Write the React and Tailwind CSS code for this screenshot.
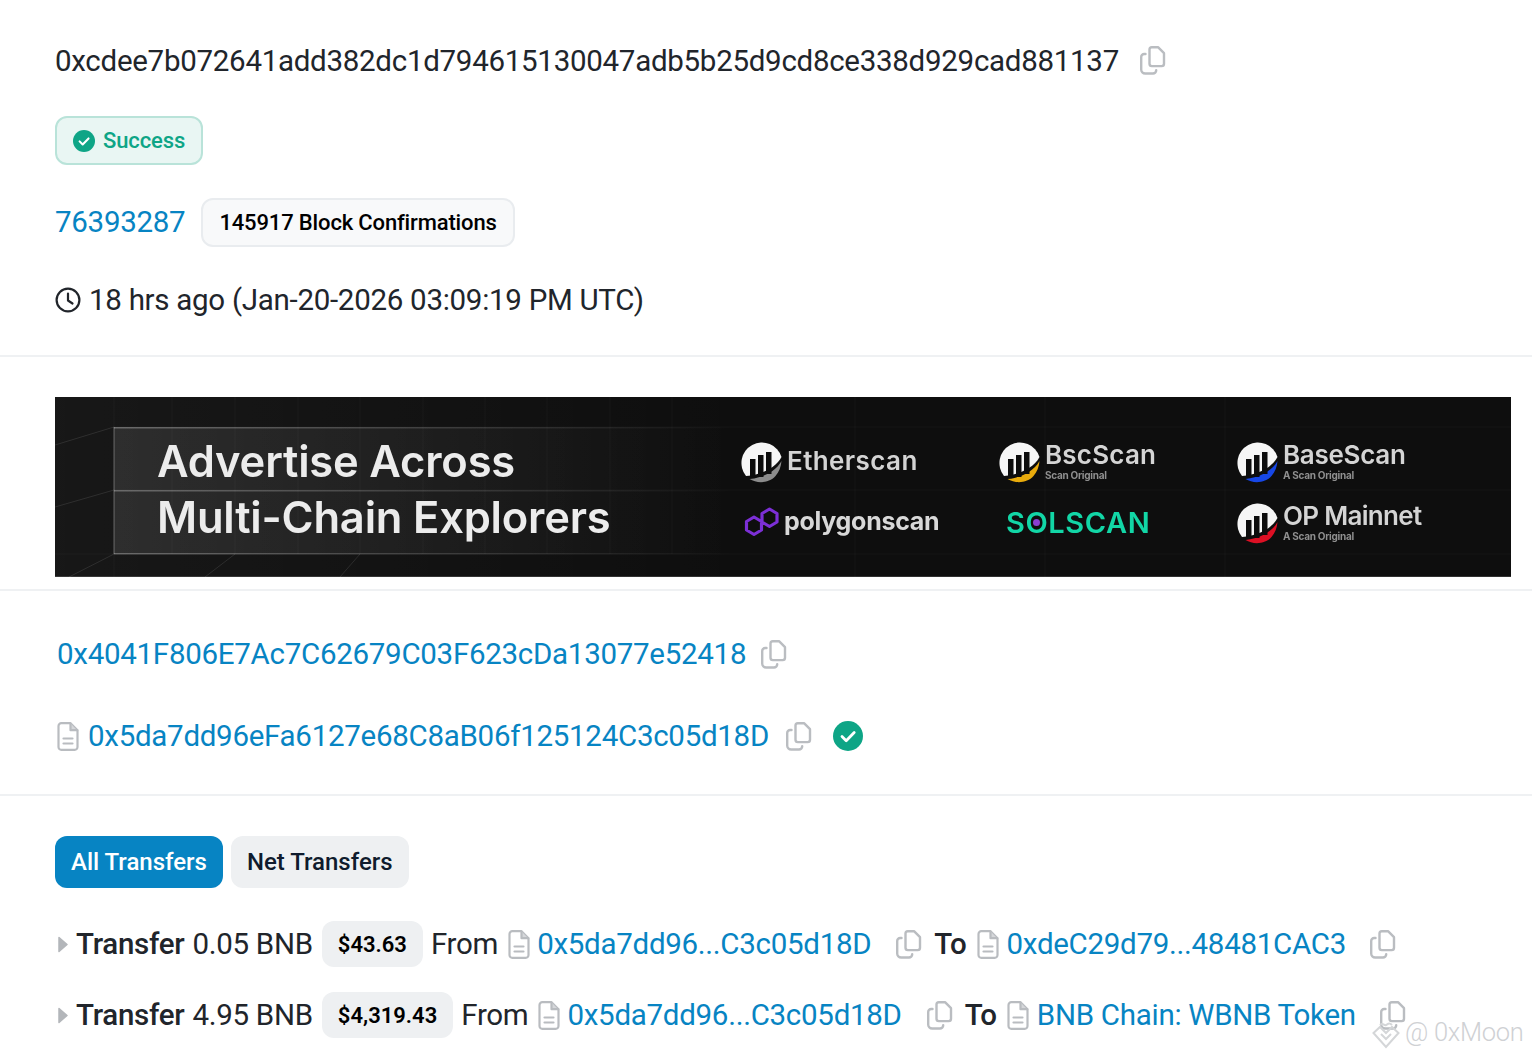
import React from "react";

const Copy = ({ className = "" }) => (
  <svg viewBox="0 0 26 29" className={`w-[26px] h-[29px] shrink-0 ${className}`} fill="none" stroke="#babdc1" strokeWidth="2.4" strokeLinejoin="round" strokeLinecap="round">
    <path d="M9.5 3.5a2.3 2.3 0 0 1 2.3-2.3h6.2l6 6v10.6a2.3 2.3 0 0 1-2.3 2.3h-9.9a2.3 2.3 0 0 1-2.3-2.3z" />
    <path d="M5.5 8H4.2a3 3 0 0 0-3 3v12.5a4 4 0 0 0 4 4H13a3.2 3.2 0 0 0 3.2-3.2" />
  </svg>
);

const Doc = ({ className = "" }) => (
  <svg viewBox="0 0 22 29" className={`w-[22px] h-[29px] shrink-0 ${className}`} fill="none" stroke="#b9bcc0" strokeWidth="2.2" strokeLinejoin="round" strokeLinecap="round">
    <path d="M1.5 4a2.8 2.8 0 0 1 2.8-2.8h9.2l7 7V25a2.8 2.8 0 0 1-2.8 2.8H4.3A2.8 2.8 0 0 1 1.5 25z" />
    <path d="M13.5 1.5V8.2h6.7" fill="#d5d7da" />
    <path d="M6.5 16.5h9M6.5 21.5h9" />
  </svg>
);

const Check = ({ size, className = "" }) => (
  <svg viewBox="0 0 30 30" width={size} height={size} className={`shrink-0 ${className}`}>
    <circle cx="15" cy="15" r="15" fill="#0ea586" />
    <path d="M9 15.5l4.2 4.2L21.2 11.5" fill="none" stroke="#fff" strokeWidth="2.8" strokeLinecap="round" strokeLinejoin="round" />
  </svg>
);

const Clock = () => (
  <svg viewBox="0 0 26 26" className="w-[26px] h-[26px] shrink-0" fill="none" stroke="#21252b" strokeWidth="2.2" strokeLinecap="round" strokeLinejoin="round">
    <circle cx="13" cy="13" r="11.4" />
    <path d="M13 6.5V13.5l4.5 3" />
  </svg>
);

const ScanMark = ({ color }) => (
  <svg viewBox="0 0 42 42" width={42} height={42} className="shrink-0">
    <path d="M41.500 15A20.500 20.500 0 1 0 6 34C20 33 36 26 41.500 15z" fill="#f6f6f6" />
    <path d="M41.500 19C36 29 24 35.500 9.500 37c8 5 20 4 26-3 3.500-4 5.500-9 6-15z" fill={color} />
    <path d="M10 35V17h5.500v18zM18 35V13h5.500v22zM26 32V10h5.500v22z" fill="#0d0d0d" />
  </svg>
);

const Logo = ({ color, name, sub, textClass = "" }) => (
  <div className="flex items-center gap-[5px]">
    <ScanMark color={color} />
    <div className="flex flex-col font-['Inter',sans-serif] text-[#d4d4d4] -mt-1">
      <span className={`text-[26px] leading-[30px] font-semibold ${textClass}`}>{name}</span>
      {sub && <span className="text-[10px] leading-[11px] font-bold text-[#8f8f8f]">{sub}</span>}
    </div>
  </div>
);

const A = ({ children, className = "" }) => <a className={`text-[#0784c3] ${className}`}>{children}</a>;

const Caret = () => (
  <svg viewBox="0 0 10 17" className="w-[10px] h-[17px] shrink-0">
    <path d="M1 1.500L9 8.500L1 15.500z" fill="#b3b6ba" stroke="#b3b6ba" strokeWidth="1.500" strokeLinejoin="round" />
  </svg>
);

const Row = ({ amount, usd, to }) => (
  <div className="flex items-center h-[46px] pl-[3px] whitespace-nowrap">
    <Caret />
    <span className="ml-[8px] font-medium">Transfer</span>
    <span className="ml-[8px]">{amount} BNB</span>
    <span className="ml-[9px] h-[46px] flex items-center px-4 rounded-[12px] bg-[#eef0f2] text-[22px] font-semibold text-black tracking-normal">{usd}</span>
    <span className="ml-[8px]">From</span>
    <Doc className="ml-[10px]" />
    <A className="ml-[7px]">0x5da7dd96...C3c05d18D</A>
    <Copy className="ml-[25px]" />
    <span className="ml-[12px] font-medium">To</span>
    <Doc className="ml-[10px]" />
    <A className="ml-[8px]">{to}</A>
    <Copy className="ml-[24px]" />
  </div>
);

export default function App() {
  return (
    <div className="relative w-[1532px] h-[1056px] overflow-hidden bg-white font-['Roboto',sans-serif] text-[29.5px] tracking-[-0.28px] text-[#21252b]">
      <section className="pl-[55px] h-[357px] border-b-2 border-[#eff1f3] flex flex-col">
        <div className="mt-[43px] flex items-center h-[36px]">
          <span>0xcdee7b072641add382dc1d794615130047adb5b25d9cd8ce338d929cad881137</span>
          <Copy className="ml-[21px] -mt-[1px]" />
        </div>
        <div className="mt-[37px] flex">
          <div className="flex items-center h-[49px] pl-[16px] pr-[16px] gap-[8px] rounded-[12px] border-2 border-[#b9e3d9] bg-[#e9f6f3] text-[22px] tracking-[-0.1px] font-medium text-[#0ea586]">
            <Check size={22} />
            <span>Success</span>
          </div>
        </div>
        <div className="mt-[33px] flex items-center">
          <A>76393287</A>
          <span className="ml-[16px] h-[49px] flex items-center px-[16px] rounded-[12px] border-2 border-[#e9ecef] bg-[#f8f9fa] text-[22px] tracking-[-0.15px] font-medium text-black">145917 Block Confirmations</span>
        </div>
        <div className="mt-[35px] flex items-center gap-[8px] h-[36px]">
          <Clock />
          <span>18 hrs ago (Jan-20-2026 03:09:19 PM UTC)</span>
        </div>
      </section>

      <section className="pl-[55px] pr-[21px] pt-[40px] h-[234px] border-b-2 border-[#eff1f3]">
        <div className="relative h-[180px] bg-[#0e0e0e] overflow-hidden flex items-center">
          <svg className="absolute inset-0 w-full h-full" viewBox="0 0 1456 180" fill="none">
            <defs>
              <linearGradient id="panel" x1="0" x2="1" y1="0" y2="0">
                <stop offset="0" stopColor="#fff" stopOpacity="0.1" />
                <stop offset="1" stopColor="#fff" stopOpacity="0" />
              </linearGradient>
              <linearGradient id="edge" x1="0" x2="1" y1="0" y2="0">
                <stop offset="0" stopColor="#fff" stopOpacity="0.28" />
                <stop offset="1" stopColor="#fff" stopOpacity="0" />
              </linearGradient>
              <linearGradient id="base" x1="0" x2="1" y1="0" y2="0">
                <stop offset="0" stopColor="#fff" stopOpacity="0.04" />
                <stop offset="1" stopColor="#fff" stopOpacity="0" />
              </linearGradient>
            </defs>
            <rect x="0" y="0" width="700" height="180" fill="url(#base)" />
            <rect x="59" y="30" width="620" height="127" fill="url(#panel)" />
            <path d="M59 30H1456M59 93H1456M0 157H1456M59 0V180M117 0V157M180 0V157M243 0V157M305 0V157M368 0V157M430 0V157M492 0V157M555 0V157M617 0V157M800 0V180M990 0V180M1170 0V180" stroke="#fff" strokeOpacity="0.035" />
            <rect x="59" y="30" width="620" height="1.500" fill="url(#edge)" />
            <rect x="59" y="93" width="620" height="1.500" fill="url(#edge)" />
            <rect x="59" y="156" width="620" height="1.500" fill="url(#edge)" />
            <path d="M59 30V157" stroke="#fff" strokeOpacity="0.2" strokeWidth="1.500" />
            <path d="M59 157L14 180M0 48L59 30M0 110L59 93M180 157L150 180M305 157L285 180" stroke="#fff" strokeOpacity="0.1" />
            <path d="M0 179.500H1456" stroke="#fff" strokeOpacity="0.15" />
          </svg>
          <div className="relative ml-[102px] w-[583px] mt-[3px] font-['Inter',sans-serif] font-semibold text-[43.5px] tracking-[-0.2px] leading-[56px] text-[#ececec] whitespace-nowrap blur-[0.4px]">
            <div>Advertise Across</div>
            <div>Multi-Chain Explorers</div>
          </div>
          <div className="relative mt-[12px] grid grid-cols-[258px_238px_auto] grid-rows-[60px_60px] items-center blur-[0.7px] whitespace-nowrap">
            <Logo color="#8c8c8c" name="Etherscan" textClass="tracking-[0.4px]" />
            <div className="-mt-[1px]"><Logo color="#e9ab0c" name="BscScan" sub="Scan Original" textClass="tracking-[0.2px]" /></div>
            <div className="-mt-[1px]"><Logo color="#1747e6" name="BaseScan" sub="A Scan Original" /></div>
            <div className="flex items-center gap-[4px] ml-[4px] -mt-[3px]">
              <svg viewBox="0 0 36 32" className="w-[36px] h-[32px]" fill="none" stroke="#7c2fd6" strokeWidth="3.200" strokeLinejoin="round">
                <path d="M10 11l7.500 4.500v8.500L10 28.500 2.500 24v-8.500zM25.500 3l7.500 4.500V16L25.500 20.500 18 16V7.500z" />
              </svg>
              <span className="font-['Inter',sans-serif] font-bold text-[25px] text-[#d8d8d8]">polygonscan</span>
            </div>
            <div className="ml-[8px] font-['Inter',sans-serif] font-semibold text-[29px] tracking-[0.6px] text-[#12d6a6]">
              S<span className="relative">O<span className="absolute left-[8px] top-[14px] w-[7px] h-[7px] rounded-full bg-[#8a3fd1]" /></span>LSCAN
            </div>
            <div className="mt-[1px]"><Logo color="#dc1024" name="OP Mainnet" sub="A Scan Original" textClass="tracking-[-0.7px]" /></div>
          </div>
        </div>
      </section>

      <section className="h-[205px] border-b-2 border-[#eff1f3] pl-[57px]">
        <div className="pt-[45px] flex items-center h-[81px]">
          <A>0x4041F806E7Ac7C62679C03F623cDa13077e52418</A>
          <Copy className="ml-[15px]" />
        </div>
        <div className="mt-[46px] flex items-center h-[36px]">
          <Doc />
          <A className="ml-[9px]">0x5da7dd96eFa6127e68C8aB06f125124C3c05d18D</A>
          <Copy className="ml-[17px]" />
          <Check size={30} className="ml-[21px] -mt-[1px]" />
        </div>
      </section>

      <section className="pl-[55px]">
        <div className="mt-[40px] flex gap-[8px] text-[24px] tracking-normal font-medium">
          <div className="h-[52px] flex items-center px-4 rounded-[12px] bg-[#0784c3] text-white">All Transfers</div>
          <div className="h-[52px] flex items-center px-4 rounded-[12px] bg-[#eef0f2] text-[#0f1b2d]">Net Transfers</div>
        </div>
        <div className="mt-[33px] flex flex-col gap-[25px]">
          <Row amount="0.05" usd="$43.63" to="0xdeC29d79...48481CAC3" />
          <Row amount="4.95" usd="$4,319.43" to="BNB Chain: WBNB Token" />
        </div>
      </section>

      <div className="absolute left-[1372px] top-[1013px] flex items-center gap-[5px] text-[25.500px] font-light text-[#cfd1d4] whitespace-nowrap">
        <svg viewBox="0 0 28 30" className="w-[28px] h-[30px] mt-[3px]" fill="none" stroke="#d4d6d8" strokeWidth="2">
          <path d="M1.500 14L8 8l6 6 6-6 6.500 6L14 28z" />
          <path d="M8 6c3-3 4 1 6 0s3-3 6 0M9 15l5 5 5-5" />
        </svg>
        <span>@ 0xMoon</span>
      </div>
    </div>
  );
}
